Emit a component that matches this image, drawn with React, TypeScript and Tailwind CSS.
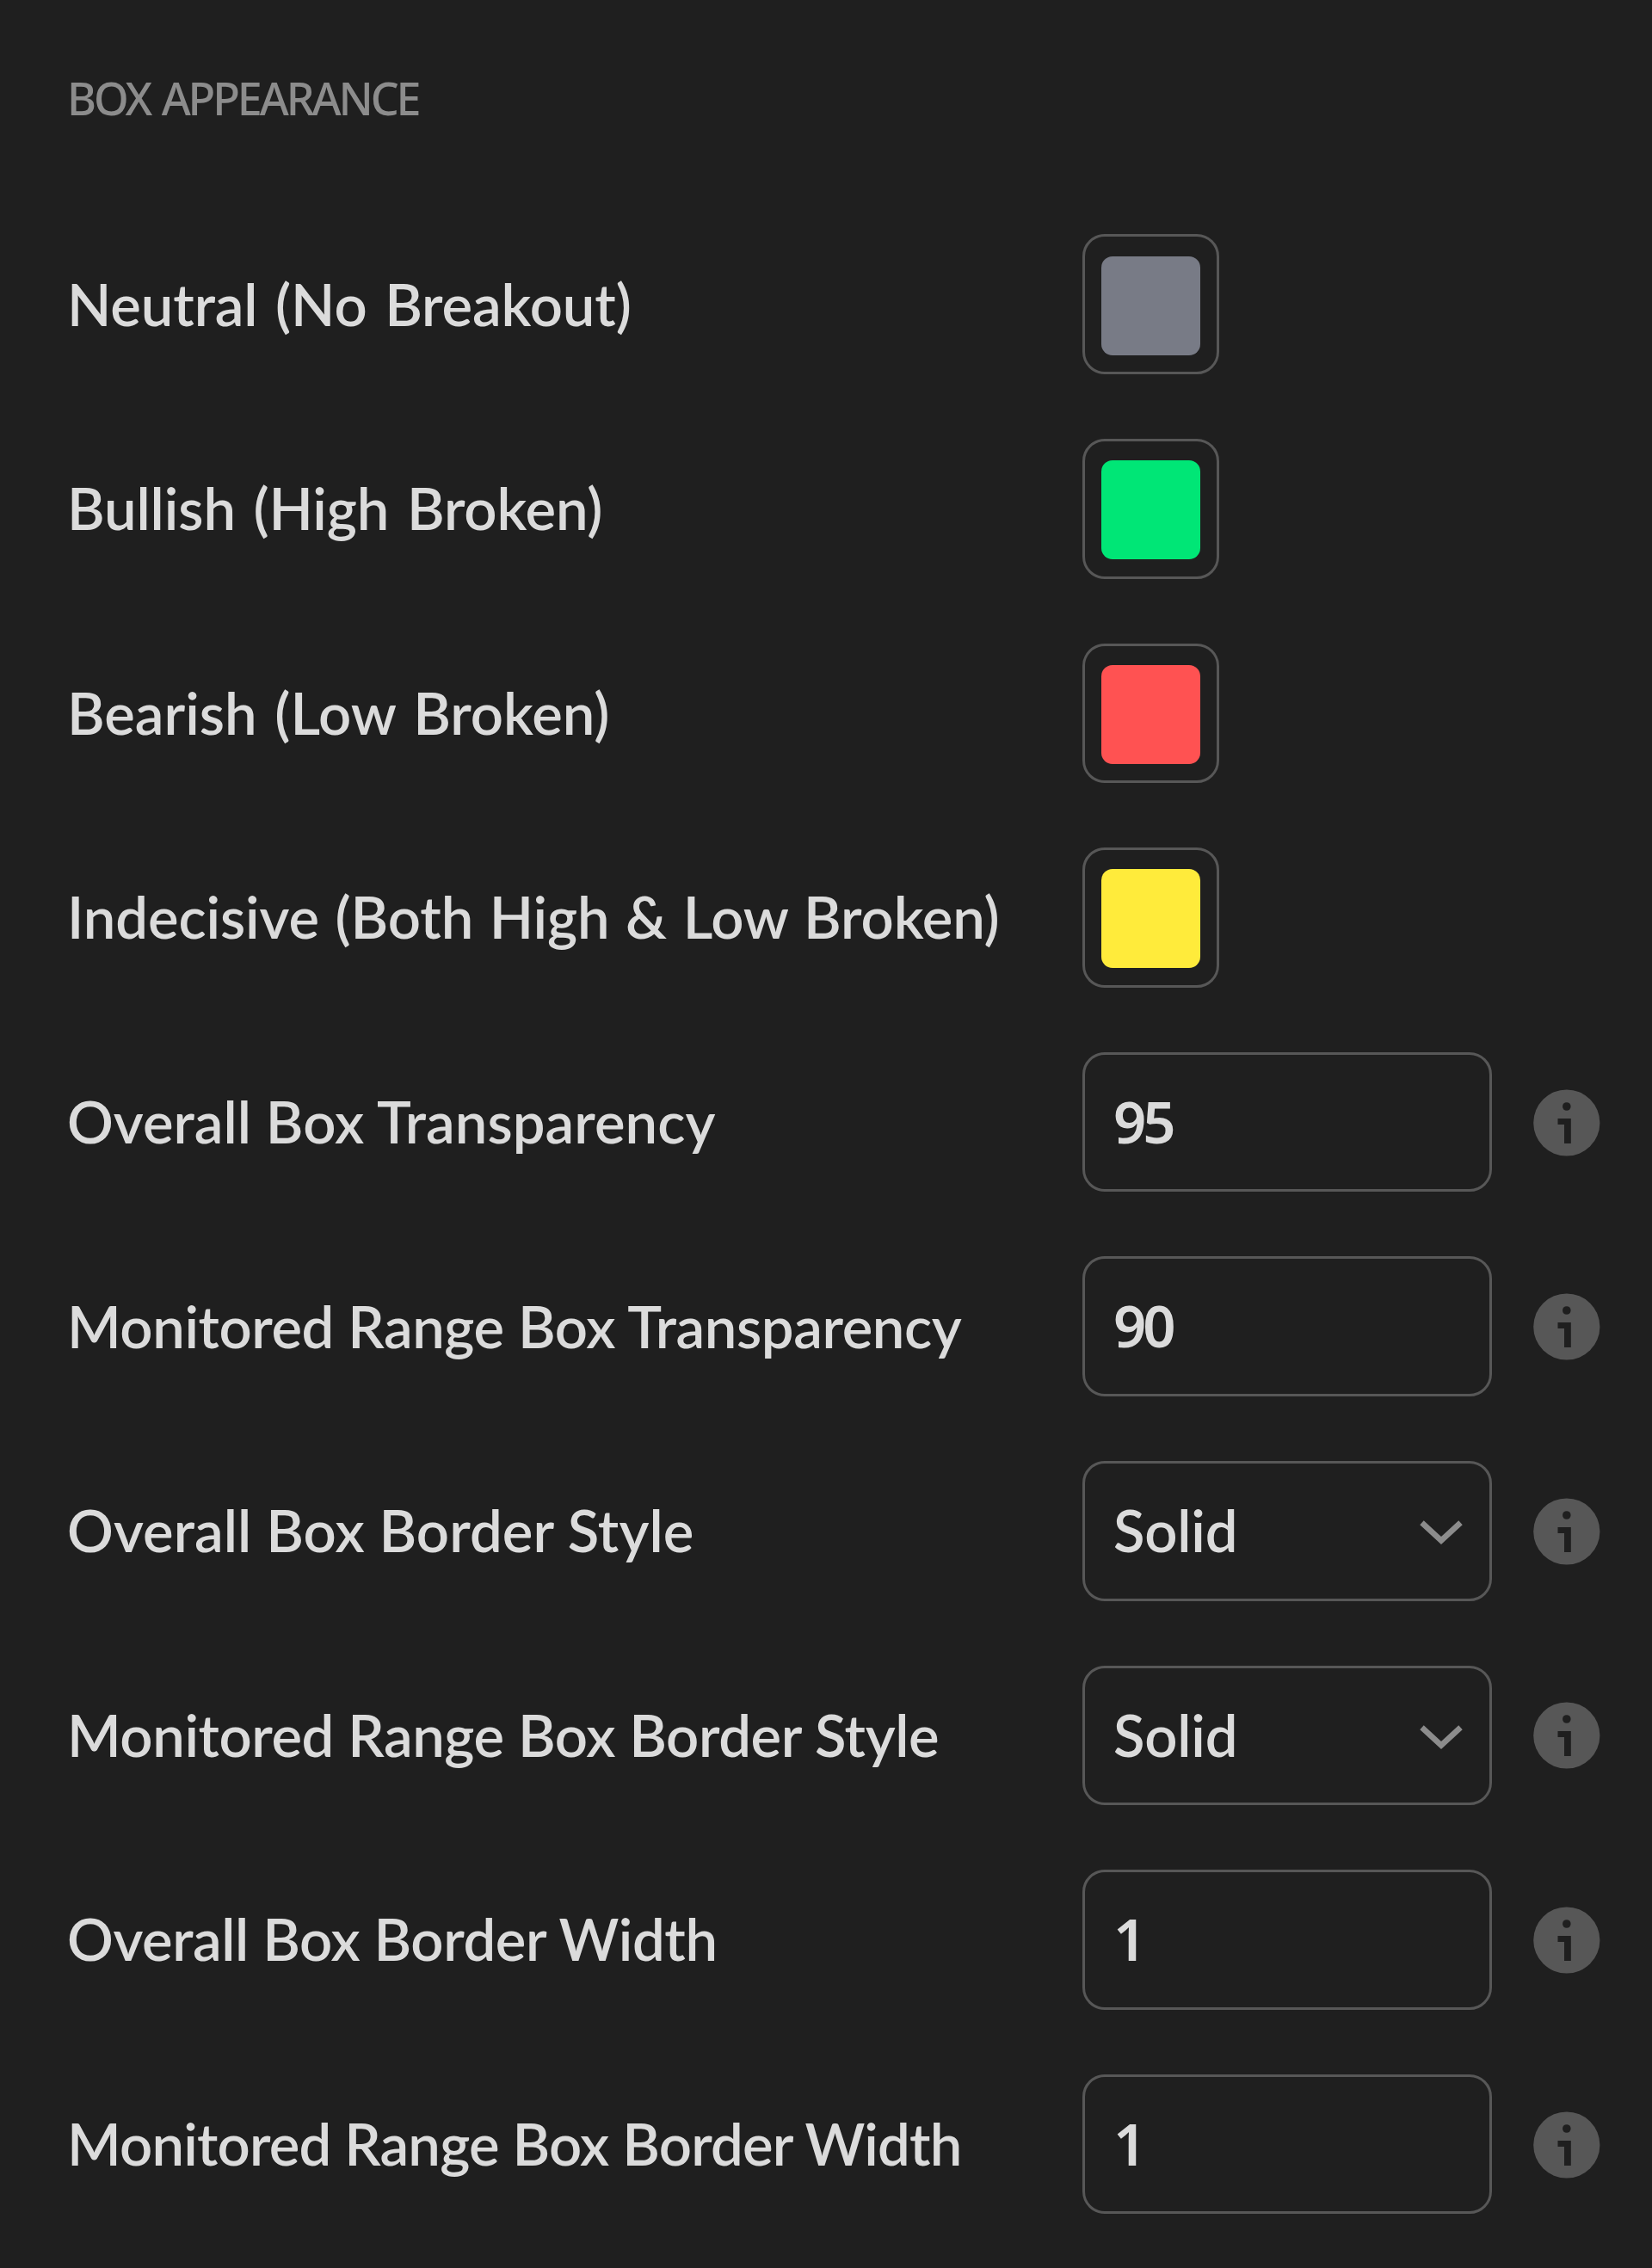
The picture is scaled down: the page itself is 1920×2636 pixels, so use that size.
type Row = {
  kind: "color" | "number" | "select";
  label: string;
  tracking: string;
  value: string;
};

const rows: Row[] = [
  { kind: "color", label: "Neutral (No Breakout)", tracking: "tracking-[-0.1px] [word-spacing:4px]", value: "bg-[#787b86]" },
  { kind: "color", label: "Bullish (High Broken)", tracking: "tracking-[-0.1px] [word-spacing:4px]", value: "bg-[#00e676]" },
  { kind: "color", label: "Bearish (Low Broken)", tracking: "tracking-[0px] [word-spacing:4px]", value: "bg-[#ff5252]" },
  { kind: "color", label: "Indecisive (Both High & Low Broken)", tracking: "tracking-[-0.1px] [word-spacing:2px]", value: "bg-[#ffeb3b]" },
  { kind: "number", label: "Overall Box Transparency", tracking: "tracking-[0.05px]", value: "95" },
  { kind: "number", label: "Monitored Range Box Transparency", tracking: "tracking-[-0.4px]", value: "90" },
  { kind: "select", label: "Overall Box Border Style", tracking: "tracking-[0.1px]", value: "Solid" },
  { kind: "select", label: "Monitored Range Box Border Style", tracking: "tracking-[-0.4px]", value: "Solid" },
  { kind: "number", label: "Overall Box Border Width", tracking: "tracking-[-0.4px]", value: "1" },
  { kind: "number", label: "Monitored Range Box Border Width", tracking: "tracking-[-0.8px]", value: "1" },
];

function InfoIcon() {
  return (
    <svg className="mt-px ml-12 size-[78px] shrink-0" viewBox="0 0 78 78">
      <circle cx="38.8" cy="39" r="38.6" fill="#575757" />
      <circle cx="38.8" cy="20" r="4.8" fill="#1f1f1f" />
      <path d="M28.5 34h15.3v29h-7.8V41h-7.5z" fill="#1f1f1f" />
    </svg>
  );
}

function ChevronIcon() {
  return (
    <svg className="mt-1 h-7 w-[50px]" viewBox="0 0 50 28" fill="none">
      <path d="M2.5 2.8L25 23.5L47.5 2.8" stroke="#8c8c8c" strokeWidth="6.6" />
    </svg>
  );
}

function ColorSwatch({ color }: { color: string }) {
  return (
    <button className="flex h-full w-[159px] items-center justify-center rounded-[26px] border-3 border-[#575757] pt-[3px]">
      <span className={`size-[115px] rounded-[13px] ${color}`} />
    </button>
  );
}

function Control({ row }: { row: Row }) {
  if (row.kind === "color") return <ColorSwatch color={row.value} />;

  return (
    <>
      <div className="flex h-full w-[476px] items-center justify-between rounded-[26px] border-3 border-[#575757] pr-[31px] pl-[33px]">
        {row.kind === "number" ? (
          <span className="pb-0.5 font-['Noto_Sans',sans-serif] font-semibold tracking-[-4px]">
            {row.value}
          </span>
        ) : (
          <>
            <span className="pb-px tracking-[-0.2px]">{row.value}</span>
            <ChevronIcon />
          </>
        )}
      </div>
      <InfoIcon />
    </>
  );
}

export default function App() {
  return (
    <main className="h-[2636px] w-[1920px] overflow-hidden bg-[#1f1f1f] pl-[78px] font-['Lato','Open_Sans',sans-serif] text-[67px] leading-none font-semibold text-[#dbdbdb]">
      <h2 className="pt-[88px] font-['Noto_Sans',sans-serif] text-[52px] leading-[52px] font-medium tracking-[-3.1px] text-[#8c8c8c] [word-spacing:3px]">
        BOX APPEARANCE
      </h2>
      <div className="mt-[132.4px] flex flex-col gap-[75px]">
        {rows.map((row) => (
          <div key={row.label} className="flex h-[162.6px] items-center">
            <span className={`w-[1180px] pb-px whitespace-nowrap ${row.tracking}`}>{row.label}</span>
            <Control row={row} />
          </div>
        ))}
      </div>
    </main>
  );
}
